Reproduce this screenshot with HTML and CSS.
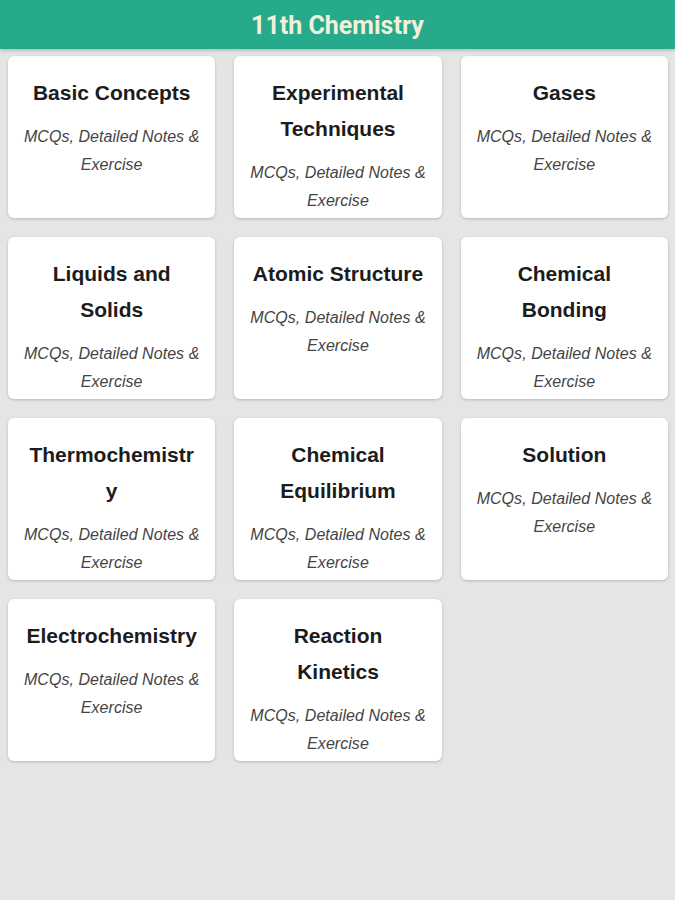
FILE: index.html
```html
<!DOCTYPE html>
<html lang="en">
<head>
<meta charset="utf-8">
<title>11th Chemistry</title>
<link rel="stylesheet" href="styles.css">
</head>
<body>
<header class="topbar">
  <h1 class="topbar-title">11th Chemistry</h1>
</header>
<main class="grid">
  <a class="card"><h2 class="card-title">Basic Concepts</h2><p class="card-sub">MCQs, Detailed Notes &amp; Exercise</p></a>
  <a class="card"><h2 class="card-title">Experimental Techniques</h2><p class="card-sub">MCQs, Detailed Notes &amp; Exercise</p></a>
  <a class="card"><h2 class="card-title">Gases</h2><p class="card-sub">MCQs, Detailed Notes &amp; Exercise</p></a>
  <a class="card"><h2 class="card-title">Liquids and Solids</h2><p class="card-sub">MCQs, Detailed Notes &amp; Exercise</p></a>
  <a class="card"><h2 class="card-title">Atomic Structure</h2><p class="card-sub">MCQs, Detailed Notes &amp; Exercise</p></a>
  <a class="card"><h2 class="card-title">Chemical Bonding</h2><p class="card-sub">MCQs, Detailed Notes &amp; Exercise</p></a>
  <a class="card"><h2 class="card-title">Thermochemistry</h2><p class="card-sub">MCQs, Detailed Notes &amp; Exercise</p></a>
  <a class="card"><h2 class="card-title">Chemical Equilibrium</h2><p class="card-sub">MCQs, Detailed Notes &amp; Exercise</p></a>
  <a class="card"><h2 class="card-title">Solution</h2><p class="card-sub">MCQs, Detailed Notes &amp; Exercise</p></a>
  <a class="card"><h2 class="card-title">Electrochemistry</h2><p class="card-sub">MCQs, Detailed Notes &amp; Exercise</p></a>
  <a class="card"><h2 class="card-title">Reaction Kinetics</h2><p class="card-sub">MCQs, Detailed Notes &amp; Exercise</p></a>
</main>
</body>
</html>
```

FILE: styles.css
```css
* { box-sizing: border-box; }
html, body {
  margin: 0;
  padding: 0;
  background: #e5e5e5;
  font-family: "Liberation Sans", Arial, sans-serif;
}
body { min-height: 900px; }

.topbar {
  height: 49px;
  background: #27a98b;
  display: flex;
  align-items: center;
  justify-content: center;
  box-shadow: 0 1px 4px rgba(0, 0, 0, 0.25);
  position: relative;
  z-index: 1;
}
.topbar-title {
  margin: 0;
  padding-top: 1px;
  font-family: Roboto, "Liberation Sans", sans-serif;
  font-weight: 700;
  font-size: 25px;
  line-height: 1;
  color: #f2f0da;
}

.grid {
  display: grid;
  grid-template-columns: repeat(3, minmax(0, 1fr));
  gap: 19px;
  padding: 7px 7px 0 8px;
}

.card {
  display: block;
  min-width: 0;
  background: #ffffff;
  border-radius: 6px;
  box-shadow: 0 1px 3px rgba(0, 0, 0, 0.2);
  padding: 19px 12px 3px;
  text-align: center;
  color: inherit;
  text-decoration: none;
}
.card-title {
  margin: 0;
  padding: 0 5.5px;
  font-size: 21px;
  font-weight: 700;
  line-height: 36px;
  color: #1c1c1c;
  overflow-wrap: anywhere;
}
.card-sub {
  margin: 12px 0 0;
  font-size: 16px;
  font-style: italic;
  line-height: 28px;
  color: #444444;
  letter-spacing: 0.05px;
}
```
